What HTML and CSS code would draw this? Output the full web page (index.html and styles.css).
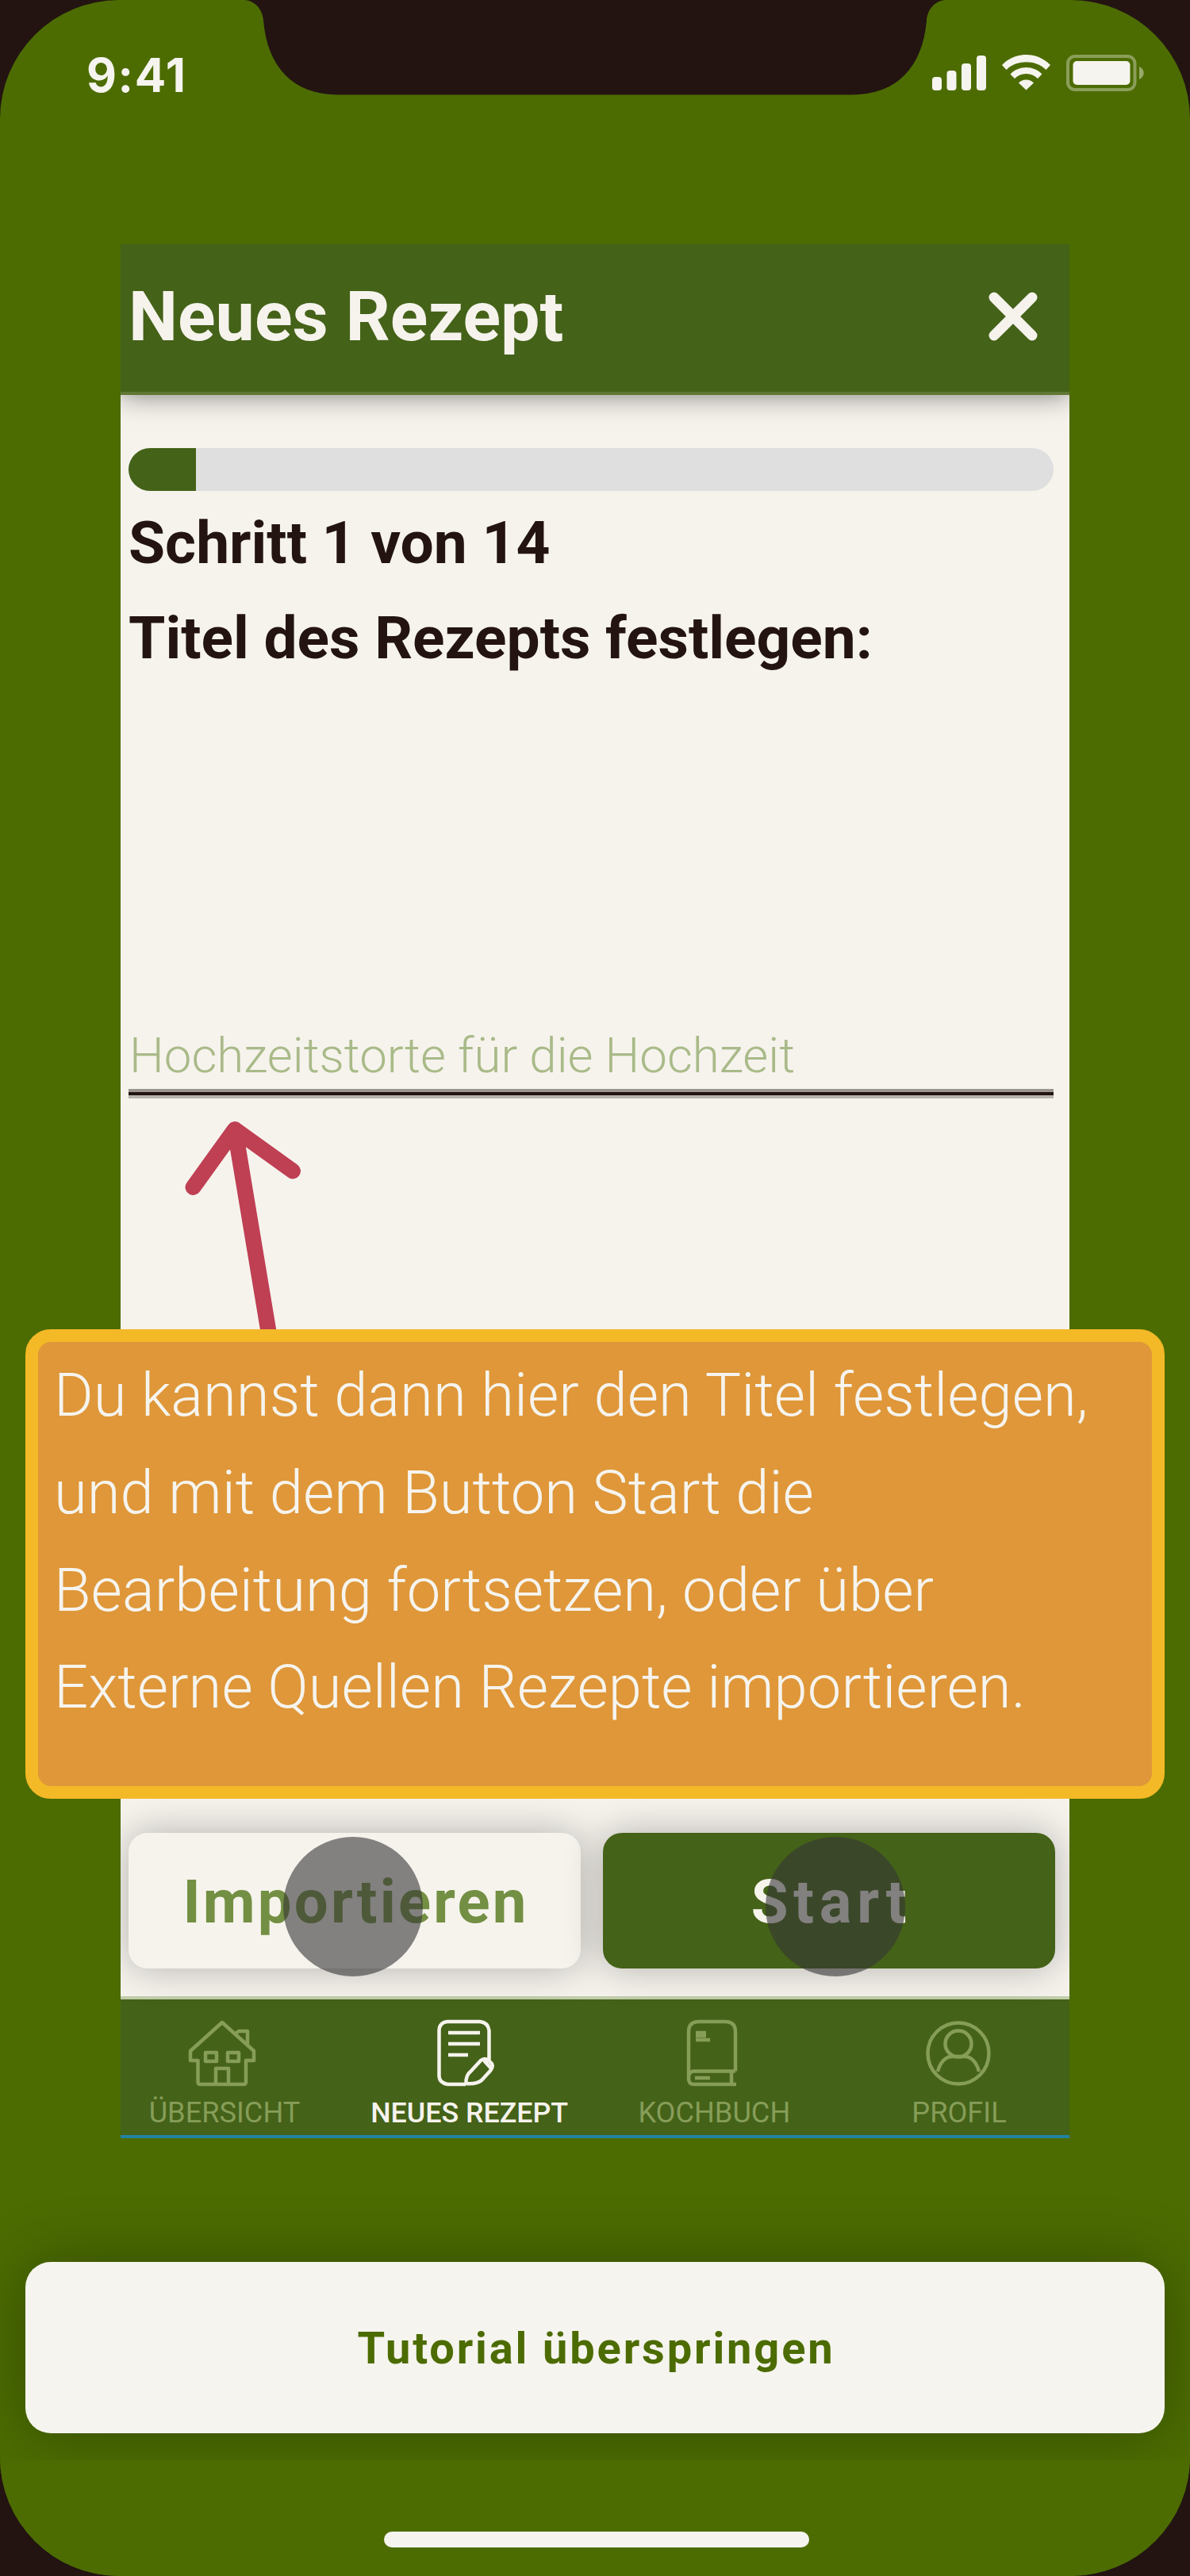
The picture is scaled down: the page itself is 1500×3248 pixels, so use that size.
FILE: index.html
```html
<!DOCTYPE html>
<html lang="de">
<head>
<meta charset="utf-8">
<title>Neues Rezept – Tutorial</title>
<link rel="stylesheet" href="styles.css">
</head>
<body>
<main class="phone">
  <svg class="notch" viewBox="0 0 884 120" aria-hidden="true">
    <path d="M0 0C14 1 23 12 24 26C29 84 61 119.500 118 119.500H766C823 119.500 855 84 860 26C861 12 870 1 884 0Z"/>
  </svg>

  <div class="status">
    <span class="time">9:41</span>
    <svg class="status-icons" viewBox="0 0 272 48" aria-hidden="true">
      <rect x="1" y="29" width="12" height="17" rx="4"/>
      <rect x="19.500" y="21" width="12" height="25" rx="4"/>
      <rect x="38" y="12" width="12" height="34" rx="4"/>
      <rect x="57" y="2" width="12" height="44" rx="4"/>
      <path d="M89 14C105 -3.500 134 -3.500 150 14L144.500 20C132 7 107 7 94.500 20ZM99.500 25.500C110 14 129 14 139.500 25.500L134 31C126.500 23 112.500 23 105 31ZM110 36.500C115 31 124 31 129 36.500L119.500 45.500Z"/>
      <rect class="battery-shell" x="172" y="3" width="84.500" height="42" rx="9"/>
      <rect x="178.500" y="9" width="72" height="30" rx="5"/>
      <path class="battery-cap" d="M262 16C269.500 19 269.500 29 262 32Z"/>
    </svg>
  </div>

  <section class="screen">
    <header class="topbar">
      <h1>Neues Rezept</h1>
      <svg class="close" viewBox="0 0 64 64" aria-label="Schließen"><path d="M8 8L56 56M56 8L8 56"/></svg>
    </header>
    <div class="content">
      <div class="progress"><div class="progress-fill"></div></div>
      <h2 class="step">Schritt 1 von 14</h2>
      <h2 class="question">Titel des Rezepts festlegen:</h2>
      <div class="field">Hochzeitstorte für die Hochzeit</div>
      <div class="actions">
        <button class="btn btn-import">Importieren<span class="touch"></span></button>
        <button class="btn btn-start">Start<span class="touch"></span></button>
      </div>
    </div>
    <nav class="tabs">
      <div class="tab">
        <svg viewBox="0 0 96 92"><path d="M45 6L5 42V54H14.500V81Q14.500 84 17.500 84H72Q75 84 75 81V54H85V42ZM62 20L66 17H77V34M24 44H38V55H24ZM52 44H66V55H52ZM37 84V64H53V84"/></svg>
        <span>ÜBERSICHT</span>
      </div>
      <div class="tab tab-active">
        <svg viewBox="0 0 96 92"><path d="M43 84H20Q10 82 9.500 74V16Q10 6 20 5H61Q71 6 72.500 16V54M21 19H61M21 33H61M21 47H46M43.500 83C43 76 45 71 50 67L62 54Q67 50 72 54L76 58Q78 62 74 67L63 79Q57 84 43.500 83ZM66 54L75 64"/></svg>
        <span>NEUES REZEPT</span>
      </div>
      <div class="tab">
        <svg viewBox="0 0 96 92"><path d="M75 67.500V18Q75 5 62 5H29Q16 5 16 18V76Q16 84 22 84H76M16 76Q16 68 22 67.500H75M70 68V84M24 76H43M25 19H38M25 23H38M25 28H43"/></svg>
        <span>KOCHBUCH</span>
      </div>
      <div class="tab">
        <svg viewBox="0 0 96 92"><circle cx="47" cy="45" r="38.500"/><circle cx="47" cy="33" r="16.500"/><path d="M21 68C24 56 31 49 39 49H55C63 49 70 56 73 68"/></svg>
        <span>PROFIL</span>
      </div>
    </nav>
  </section>

  <svg class="arrow" viewBox="0 0 180 290" aria-hidden="true"><path d="M26.500 97L79 24L152 76.500M79 24L122 282"/></svg>
  <p class="callout">Du kannst dann hier den Titel festlegen,<br>und mit dem Button Start die<br>Bearbeitung fortsetzen, oder über<br>Externe Quellen Rezepte importieren.</p>

  <button class="skip">Tutorial überspringen</button>
  <footer class="home"><div class="home-bar"></div></footer>
</main>
</body>
</html>
```
FILE: styles.css
```css
* { box-sizing: border-box; }

body {
  margin: 0;
  background: #231412;
  font-family: Roboto, "Liberation Sans", sans-serif;
}

h1, h2, p { margin: 0; }

button {
  border: 0;
  font-family: inherit;
}

.phone {
  position: relative;
  display: flex;
  flex-direction: column;
  align-items: center;
  width: 1500px;
  height: 3248px;
  overflow: hidden;
  border-radius: 150px;
  background: #4c6c02;
}

.notch {
  position: absolute;
  top: 0;
  left: 308px;
  width: 884px;
  height: 120px;
  fill: #231412;
}

/* status bar */
.status {
  display: flex;
  justify-content: space-between;
  align-items: flex-start;
  width: 100%;
  height: 308px;
  flex: none;
  padding: 68px 54px 0 109px;
}

.time {
  font: 700 58.500px/54px Inter, "Liberation Sans", sans-serif;
  letter-spacing: 1.600px;
  color: #f6f4ee;
}

.status-icons {
  width: 272px;
  height: 48px;
  fill: #f6f4ee;
}

.status-icons .battery-shell {
  fill: none;
  stroke: #f6f4ee;
  stroke-width: 4;
  opacity: .37;
}

.status-icons .battery-cap { opacity: .45; }

/* app screen preview */
.screen {
  display: flex;
  flex-direction: column;
  flex: none;
  width: 1196px;
  height: 2388px;
  overflow: hidden;
  background: #f6f3ed;
  border-bottom: 4px solid #2283a2;
}

.topbar {
  position: relative;
  display: flex;
  justify-content: space-between;
  align-items: center;
  flex: none;
  height: 190px;
  padding: 0 39px 4px 10px;
  background: #446218;
  border-bottom: 4px solid #5f7733;
  box-shadow: 0 0 32px rgba(0, 0, 0, .5);
}

.topbar h1 {
  font-size: 88px;
  line-height: 100px;
  font-weight: 700;
  color: #f6f3ed;
}

.close {
  width: 64px;
  height: 64px;
  fill: none;
  stroke: #f6f3ed;
  stroke-width: 13;
  stroke-linecap: round;
}

.content {
  display: flex;
  flex-direction: column;
  flex: 1;
  padding: 67px 18px 35px 10px;
}

.progress {
  flex: none;
  height: 54px;
  margin-right: 2px;
  overflow: hidden;
  border-radius: 27px;
  background: #dfdfdf;
}

.progress-fill {
  width: 85px;
  height: 100%;
  background: #446218;
}

.step, .question {
  font-size: 74.900px;
  line-height: 100px;
  font-weight: 700;
  color: #231412;
}

.step { margin-top: 16px; }
.question { margin-top: 20px; }

.field {
  margin: 436px 2px 0 0;
  padding: 0 0 14px 1px;
  background: linear-gradient(#9a958f 0 4px, #231412 4px 8px, #b8b4ae 8px) bottom / 100% 12px no-repeat;
  font-size: 61.800px;
  line-height: 80px;
  font-weight: 300;
  color: #a9ba88;
}

.actions {
  display: grid;
  grid-template-columns: 1fr 1fr;
  gap: 28px;
  margin-top: auto;
}

.btn {
  position: relative;
  height: 171px;
  padding: 2px 0 0;
  border-radius: 24px;
  box-shadow: 0 0 48px rgba(0, 0, 0, .28);
  font-size: 76px;
  line-height: 90px;
  font-weight: 700;
}

.btn-import {
  padding-left: 3px;
  background: #f6f3ed;
  color: #738f43;
  letter-spacing: 3.200px;
}

.btn-start {
  padding-left: 6px;
  background: #446218;
  color: #f6f3ed;
  letter-spacing: 6.800px;
}

/* tap markers over the buttons */
.touch {
  position: absolute;
  top: 5px;
  left: 195px;
  width: 176px;
  height: 176px;
  border-radius: 50%;
  background: rgba(53, 53, 53, .6);
}

.btn-start .touch { left: 205px; }

.tabs {
  display: flex;
  justify-content: center;
  flex: none;
  height: 175px;
  padding-right: 8px;
  border-top: 4px solid #c3cdaa;
  background: #446218;
}

.tab {
  display: flex;
  flex-direction: column;
  align-items: center;
  flex: 0 0 308.700px;
  gap: 6px;
  padding-top: 23px;
  color: #869d58;
  font-size: 36.200px;
  line-height: 44px;
}

.tab svg {
  flex: none;
  width: 96px;
  height: 92px;
  fill: none;
  stroke: currentColor;
  stroke-width: 4.500;
  stroke-linejoin: round;
}

.tab-active {
  color: #f6f3ed;
  font-size: 35.800px;
  font-weight: 500;
}

/* tutorial hint */
.arrow {
  position: absolute;
  top: 1400px;
  left: 217px;
  width: 180px;
  height: 290px;
  fill: none;
  stroke: #bf3f53;
  stroke-width: 20;
  stroke-linecap: round;
  stroke-linejoin: round;
}

.callout {
  position: absolute;
  top: 1676px;
  left: 32px;
  width: 1436px;
  height: 592px;
  padding: 6px 20px;
  border: 16px solid #f3b926;
  border-radius: 32px;
  background: #df9739;
  color: #f6f4ee;
  font-size: 76px;
  line-height: 122.800px;
  font-weight: 300;
  white-space: nowrap;
}

.skip {
  flex: none;
  width: 1436px;
  height: 216px;
  margin-top: 156px;
  padding: 1px 0 0 3px;
  border-radius: 32px;
  background: #f6f4ee;
  box-shadow: 0 0 80px rgba(0, 0, 0, .3);
  color: #4c6c02;
  font-size: 56px;
  line-height: 66px;
  font-weight: 700;
  letter-spacing: 2.860px;
}

.home {
  position: relative;
  display: flex;
  justify-content: center;
  flex: none;
  width: 100%;
  height: 146px;
  margin-top: 34px;
  padding: 90px 0 0 4px;
  background: #4c6c02;
}

.home-bar {
  width: 536px;
  height: 20px;
  border-radius: 10px;
  background: #f6f4ee;
}
```
